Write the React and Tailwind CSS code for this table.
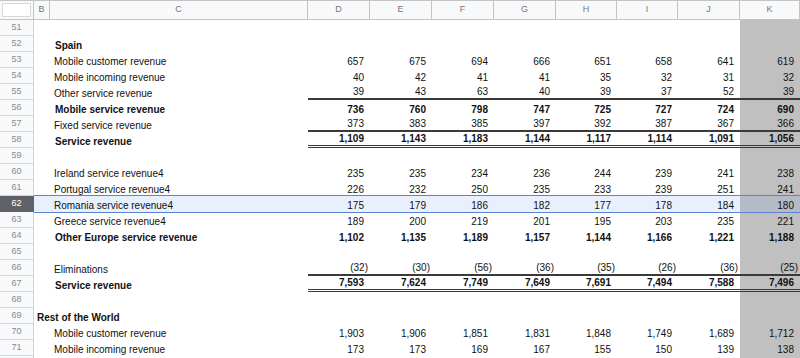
const cols = ["D", "E", "F", "G", "H", "I", "J", "K"];
const colW = ["w-[62px]", "w-[62px]", "w-[62px]", "w-[62px]", "w-[61px]", "w-[61px]", "w-[62px]", "w-[60px]"];

// kind: b = bold, h = heading (starts in col B)
// line: s = single rule under values, d = double rule
const rows = [
  { n: 51 },
  { n: 52, label: "Spain", kind: "b" },
  { n: 53, label: "Mobile customer revenue", v: ["657", "675", "694", "666", "651", "658", "641", "619"] },
  { n: 54, label: "Mobile incoming revenue", v: ["40", "42", "41", "41", "35", "32", "31", "32"] },
  { n: 55, label: "Other service revenue", v: ["39", "43", "63", "40", "39", "37", "52", "39"], line: "s" },
  { n: 56, label: "Mobile service revenue", kind: "b", v: ["736", "760", "798", "747", "725", "727", "724", "690"] },
  { n: 57, label: "Fixed service revenue", v: ["373", "383", "385", "397", "392", "387", "367", "366"], line: "s" },
  { n: 58, label: "Service revenue", kind: "b", v: ["1,109", "1,143", "1,183", "1,144", "1,117", "1,114", "1,091", "1,056"], line: "d" },
  { n: 59 },
  { n: 60, label: "Ireland service revenue4", v: ["235", "235", "234", "236", "244", "239", "241", "238"] },
  { n: 61, label: "Portugal service revenue4", v: ["226", "232", "250", "235", "233", "239", "251", "241"] },
  { n: 62, label: "Romania service revenue4", v: ["175", "179", "186", "182", "177", "178", "184", "180"], sel: true },
  { n: 63, label: "Greece service revenue4", v: ["189", "200", "219", "201", "195", "203", "235", "221"] },
  { n: 64, label: "Other Europe service revenue", kind: "b", v: ["1,102", "1,135", "1,189", "1,157", "1,144", "1,166", "1,221", "1,188"] },
  { n: 65 },
  { n: 66, label: "Eliminations", v: ["(32)", "(30)", "(56)", "(36)", "(35)", "(26)", "(36)", "(25)"], line: "s" },
  { n: 67, label: "Service revenue", kind: "b", v: ["7,593", "7,624", "7,749", "7,649", "7,691", "7,494", "7,588", "7,496"], line: "d" },
  { n: 68 },
  { n: 69, label: "Rest of the World", kind: "h" },
  { n: 70, label: "Mobile customer revenue", v: ["1,903", "1,906", "1,851", "1,831", "1,848", "1,749", "1,689", "1,712"] },
  { n: 71, label: "Mobile incoming revenue", v: ["173", "173", "169", "167", "155", "150", "139", "138"] },
  { n: 72, blank: true },
];

function Row({ r }) {
  const lineCls =
    r.line === "s" ? "border-b-[2px] border-[#3a3a3a]" : r.line === "d" ? "border-b-[3px] border-double border-[#3a3a3a]" : "";
  return (
    <div className="flex h-4 shrink-0">
      <div
        className={`w-[34px] shrink-0 flex items-center justify-center text-[9px] border-r border-b ${
          r.sel ? "bg-[#5f6368] text-white border-[#5f6368]" : "bg-[#f8f9fa] text-[#8a8a8a] border-[#d4d4d4]"
        }`}
      >
        {r.blank ? "" : r.n}
      </div>
      <div
        className={`flex flex-1 relative ${r.sel ? "bg-[#e8f0fe] border-y border-[#5b84cf] -my-px h-[18px] z-10" : ""}`}
      >
        <div
          className={`w-[274px] shrink-0 flex items-end whitespace-nowrap text-[10px] leading-[12px] text-[#111] ${
            r.kind === "h" ? "pl-[3px] font-bold" : r.kind === "b" ? "pl-[21px] font-bold" : "pl-[20px]"
          }`}
        >
          {r.label}
        </div>
        {cols.map((c, i) => {
          const val = r.v ? r.v[i] : "";
          const paren = val.startsWith("(");
          return (
            <div
              key={c}
              className={`${colW[i]} shrink-0 flex items-end justify-end text-[10px] leading-[12px] text-[#111] ${
                c === "K" ? (r.sel ? "bg-[#b4bac6]" : "bg-[#c0c0c0]") : ""
              } ${r.kind === "b" ? "font-bold" : ""} ${lineCls} ${paren ? "pr-[2px]" : "pr-[6px]"}`}
            >
              {val}
            </div>
          );
        })}
      </div>
    </div>
  );
}

export default function App() {
  return (
    <div className="w-[800px] h-[358px] overflow-hidden bg-white flex flex-col font-['Liberation_Sans',Arial,sans-serif]">
      {/* Column header */}
      <div className="flex h-5 shrink-0 bg-[#f8f9fa] border-t border-b border-[#c4c4c4] text-[9px] text-[#777]">
        <div className="w-[34px] shrink-0 border-r border-[#c4c4c4] p-[2px]">
          <div className="w-full h-full bg-white border border-[#d8d8d8]" />
        </div>
        <div className="w-[16px] shrink-0 border-r border-[#c4c4c4] flex items-center justify-center">B</div>
        <div className="w-[258px] shrink-0 border-r border-[#c4c4c4] flex items-center justify-center">C</div>
        {cols.map((c, i) => (
          <div key={c} className={`${colW[i]} shrink-0 border-r border-[#c4c4c4] flex items-center justify-center`}>
            {c}
          </div>
        ))}
      </div>
      {rows.map((r) => (
        <Row key={r.n} r={r} />
      ))}
    </div>
  );
}
